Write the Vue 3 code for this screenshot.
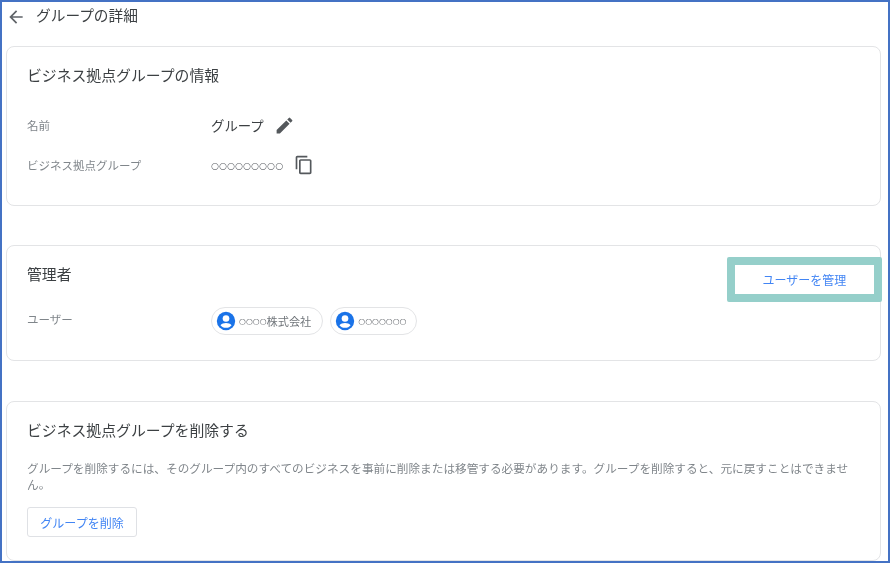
<script setup>
const chips = [
  { id: 1, dots: '○○○○', label: '株式会社' },
  { id: 2, dots: '○○○○○○○', label: '' },
]
</script>

<template>
  <div class="page">
    <header class="head">
      <svg class="back" viewBox="0 0 24 24" width="20" height="20"><path d="M20 11H7.83l5.59-5.59L12 4l-8 8 8 8 1.41-1.41L7.83 13H20v-2z" /></svg>
      <h1>グループの詳細</h1>
    </header>

    <section class="card info">
      <h2>ビジネス拠点グループの情報</h2>
      <div class="row name-row">
        <div class="label">名前</div>
        <div class="value">
          <span class="name">グループ</span>
          <svg class="icon" viewBox="0 0 24 24" width="21" height="21"><path d="M3 17.25V21h3.75L17.81 9.94l-3.75-3.75L3 17.25zM20.71 7.04a1 1 0 0 0 0-1.41l-2.34-2.34a1 1 0 0 0-1.41 0l-1.83 1.83 3.75 3.75 1.83-1.83z" /></svg>
        </div>
      </div>
      <div class="row id-row">
        <div class="label">ビジネス拠点グループ</div>
        <div class="value">
          <span class="code">○○○○○○○○○</span>
          <svg class="icon copy" viewBox="0 0 24 24" width="20" height="20"><path d="M16 1H4c-1.1 0-2 .9-2 2v14h2V3h12V1zm3 4H8c-1.1 0-2 .9-2 2v14c0 1.1.9 2 2 2h11c1.1 0 2-.9 2-2V7c0-1.1-.9-2-2-2zm0 16H8V7h11v14z" /></svg>
        </div>
      </div>
    </section>

    <section class="card admin">
      <h2>管理者</h2>
      <div class="row user-row">
        <div class="label">ユーザー</div>
        <div class="chips">
          <div v-for="c in chips" :key="c.id" class="chip">
            <svg viewBox="0 0 24 24" width="20" height="20"><circle cx="12" cy="12" r="11" fill="#1a73e8" /><circle cx="12" cy="9" r="4" fill="#fff" /><path fill="#fff" d="M12 20.2c-2.900 0-5.300-1.200-6.700-3.100 1.300-1.700 4.100-2.600 6.700-2.600s5.400.9 6.700 2.600c-1.400 1.900-3.800 3.100-6.700 3.100z" /></svg>
            <span class="dots">{{ c.dots }}</span><span>{{ c.label }}</span>
          </div>
        </div>
      </div>
      <button class="btn manage">ユーザーを管理</button>
    </section>

    <section class="card remove">
      <h2>ビジネス拠点グループを削除する</h2>
      <p>グループを削除するには、そのグループ内のすべてのビジネスを事前に削除または移管する必要があります。グループを削除すると、元に戻すことはできません。</p>
      <button class="btn delete">グループを削除</button>
    </section>
  </div>
</template>

<style scoped>
.page {
  box-sizing: border-box;
  width: 890px;
  height: 563px;
  overflow: hidden;
  background: #fff;
  border: 2px solid #4472c4;
  padding: 0 7px 0 4px;
  font-family: Roboto, "Noto Sans CJK JP", "Liberation Sans", sans-serif;
  color: #3c4043;
  filter: blur(0.3px);
}
.head {
  display: flex;
  align-items: center;
  height: 29px;
  margin-bottom: 15px;
}
.back {
  fill: #5f6368;
  margin-right: 10px;
}
h1 {
  margin: 0;
  font-size: 14.7px;
  font-weight: 400;
  line-height: 29px;
}
.card {
  position: relative;
  box-sizing: border-box;
  border: 1px solid #e3e4e6;
  border-radius: 8px;
  padding: 0 20px;
}
.info { height: 160px; padding-top: 19px; margin-bottom: 39px; }
.admin { height: 116px; padding-top: 19px; margin-bottom: 40px; }
.remove { height: 160px; padding-top: 19px; }
h2 {
  margin: 0;
  font-size: 14.85px;
  font-weight: 400;
  line-height: 20px;
  color: #3c4043;
}
.row {
  display: flex;
  align-items: center;
}
.label {
  width: 184px;
  font-size: 11.5px;
  color: #80868b;
}
.value {
  display: flex;
  align-items: center;
}
.name-row { margin-top: 28px; height: 22px; }
.id-row { margin-top: 18px; height: 22px; }
.name {
  font-size: 13.4px;
  margin-right: 10px;
}
.code {
  font-family: "DejaVu Sans", sans-serif;
  font-size: 9.2px;
  color: #5f6368;
  margin-right: 11px;
}
.icon { fill: #54585c; }
.user-row { margin-top: 22px; align-items: flex-start; }
.user-row .label { line-height: 16px; margin-top: 5px; }
.chips {
  display: flex;
  gap: 7px;
}
.chip {
  display: flex;
  align-items: center;
  box-sizing: border-box;
  height: 28px;
  padding: 0 11px 0 4px;
  border: 1px solid #e3e4e6;
  border-radius: 14px;
  font-size: 11.2px;
  color: #70757a;
}
.chip:last-child { padding-right: 9px; }
.chip svg { margin-right: 3px; }
.dots {
  font-family: "DejaVu Sans", sans-serif;
  font-size: 7.9px;
  color: #5f6368;
}
.btn {
  box-sizing: border-box;
  font-family: inherit;
  font-size: 12px;
  font-weight: 400;
  color: #4285f4;
  background: #fff;
  padding: 0;
}
.manage {
  position: absolute;
  right: -2px;
  top: 11px;
  width: 155px;
  height: 45px;
  border: 8px solid #95cfca;
  border-radius: 2px;
}
p {
  margin: 20px 0 0;
  font-size: 11.65px;
  line-height: 16px;
  color: #80868b;
}
.delete {
  display: block;
  margin-top: 14px;
  width: 110px;
  height: 30px;
  border: 1px solid #dfe1e5;
  border-radius: 3px;
}
</style>
